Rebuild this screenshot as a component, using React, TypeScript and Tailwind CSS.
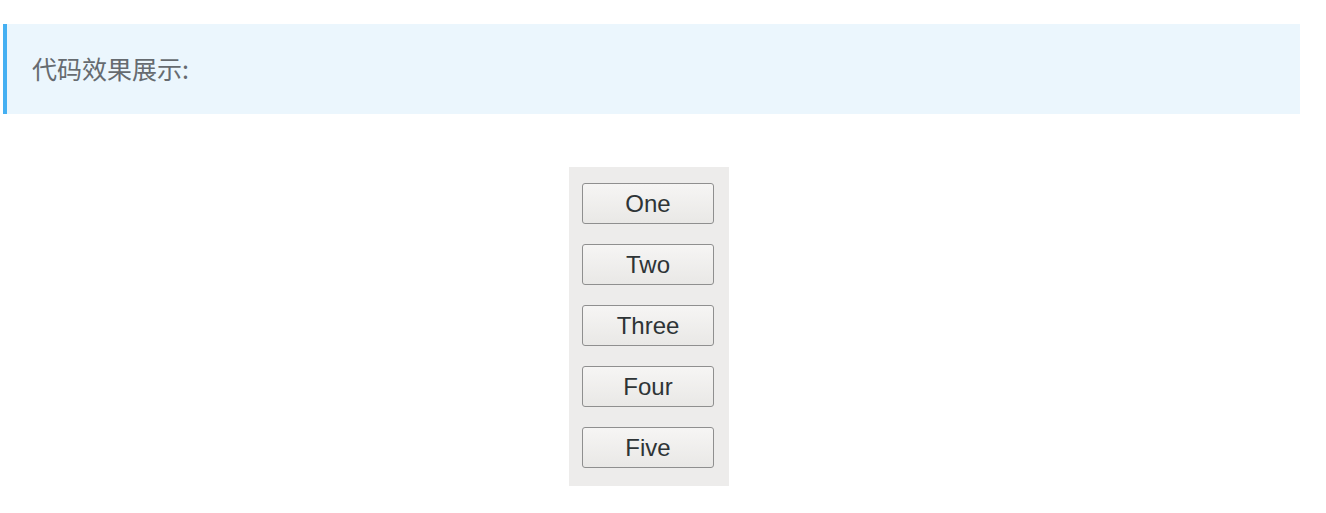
const labels = ['One', 'Two', 'Three', 'Four', 'Five'];

export default function App() {
    return (
        <div className="min-h-[513px] w-full bg-white pt-6">
            <div className="ml-[3px] flex h-[90px] w-[1297px] items-center border-l-4 border-[#45b0f2] bg-[#ebf6fd] pl-[25px]">
                <p className="text-[25px] text-[#666b70] [font-family:'Noto_Sans_CJK_SC',sans-serif]">
                    代码效果展示:
                </p>
            </div>

            <div className="mt-[53px] flex justify-center">
                <div className="ml-[-28px] flex w-[160px] flex-col gap-5 bg-[#edeceb] pt-4 pb-[18px] pl-[13px] pr-[15px]">
                    {labels.map((label) => (
                        <button
                            key={label}
                            className="h-[41px] w-[132px] rounded-[3px] border border-[#8f8f8f] bg-gradient-to-b from-[#f6f5f4] to-[#e9e8e6] text-[24px] leading-none text-[#2e3436] [font-family:'Liberation_Sans',sans-serif]"
                        >
                            {label}
                        </button>
                    ))}
                </div>
            </div>
        </div>
    );
}
